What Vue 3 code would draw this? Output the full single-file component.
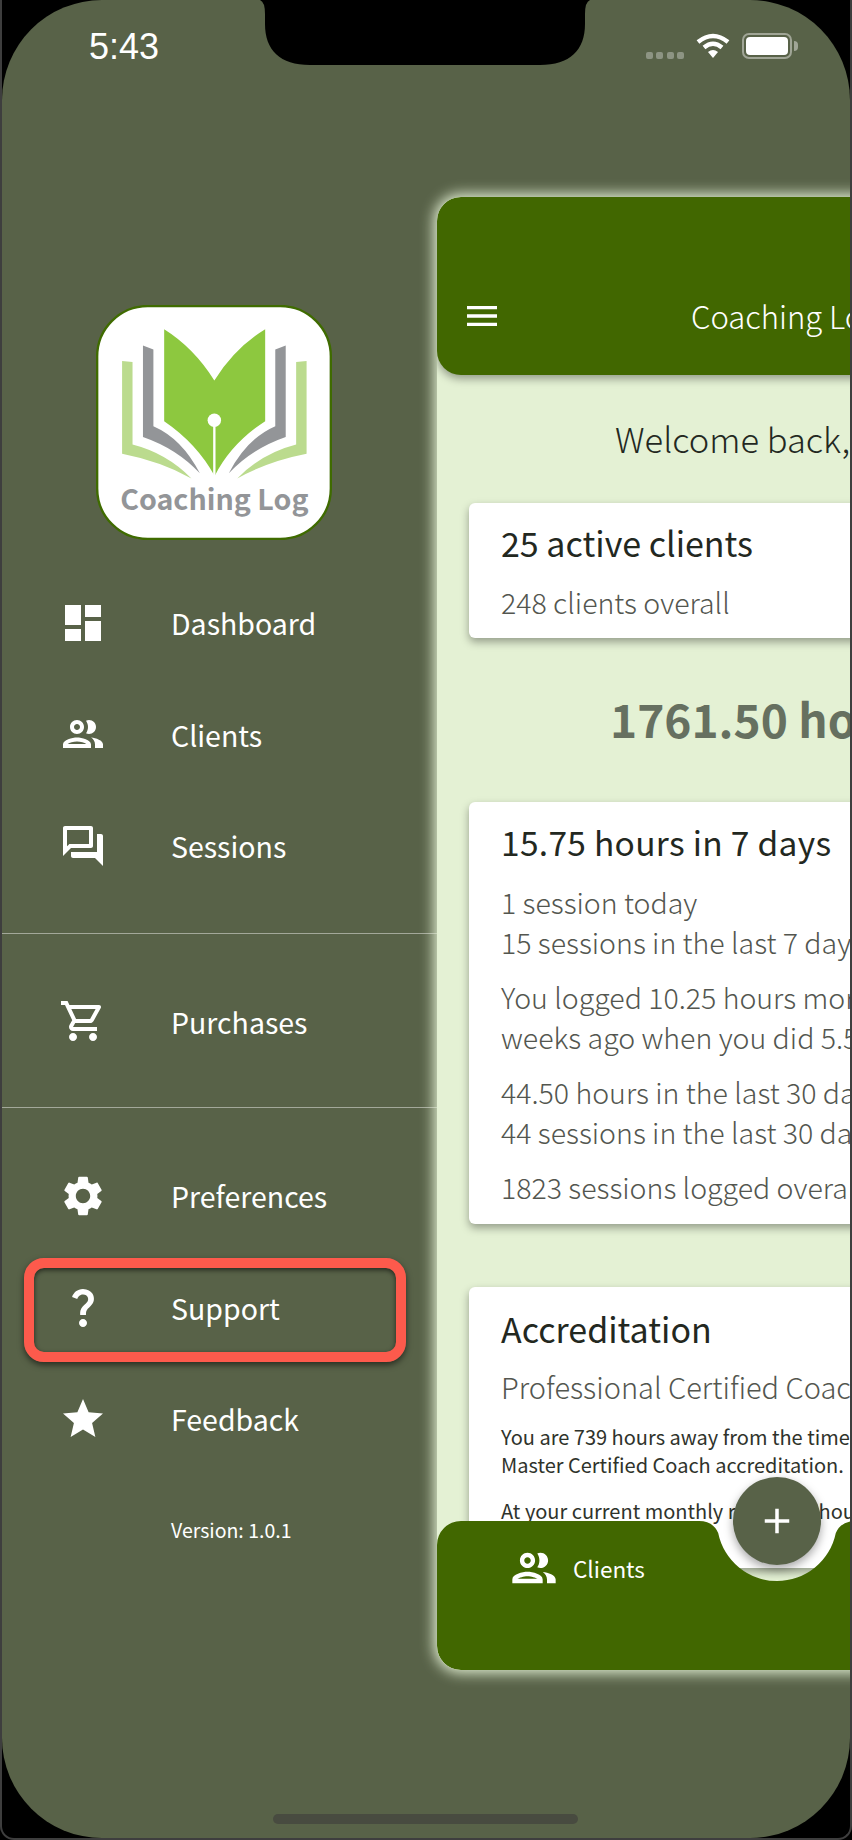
<script setup>
const topNav = [
  { label: 'Dashboard', icon: 'M3 13h8V3H3v10zm0 8h8v-6H3v6zm10 0h8V11h-8v10zm0-18v6h8V3h-8z' },
  { label: 'Clients', icon: 'M9 13.75c-2.34 0-7 1.17-7 3.5V19h14v-1.75c0-2.33-4.66-3.5-7-3.5zM4.34 17c.84-.58 2.87-1.25 4.66-1.25s3.82.67 4.66 1.25H4.34zM9 12c1.93 0 3.5-1.57 3.5-3.5S10.93 5 9 5 5.5 6.57 5.5 8.5 7.07 12 9 12zm0-5c.83 0 1.5.67 1.5 1.5S9.83 10 9 10s-1.5-.67-1.5-1.5S8.17 7 9 7zm7.04 6.81c1.16.84 1.96 1.96 1.96 3.44V19h4v-1.75c0-2.02-3.5-3.17-5.96-3.44zM15 12c1.93 0 3.5-1.57 3.5-3.5S16.93 5 15 5c-.54 0-1.04.13-1.5.35.63.89 1 1.98 1 3.15s-.37 2.26-1 3.15c.46.22.96.35 1.5.35z' },
  { label: 'Sessions', icon: 'M15 4v7H5.17l-.59.59-.58.58V4h11m1-2H3c-.55 0-1 .45-1 1v14l4-4h10c.55 0 1-.45 1-1V3c0-.55-.45-1-1-1zm5 4h-2v9H6v2c0 .55.45 1 1 1h11l4 4V7c0-.55-.45-1-1-1z' }
]
const cartIcon = 'M15.55 13c.75 0 1.41-.41 1.75-1.03l3.58-6.49c.37-.66-.11-1.48-.87-1.48H5.21l-.94-2H1v2h2l3.6 7.59-1.35 2.44C4.52 15.37 5.48 17 7 17h12v-2H7l1.1-2h7.45zM6.16 6h12.15l-2.76 5H8.53L6.16 6zM7 18c-1.1 0-1.99.9-1.99 2S5.9 22 7 22s2-.9 2-2-.9-2-2-2zm10 0c-1.1 0-1.99.9-1.99 2s.89 2 1.99 2 2-.9 2-2-.9-2-2-2z'
const bottomNav = [
  { label: 'Preferences', icon: 'M19.14 12.94c.04-.3.06-.61.06-.94 0-.32-.02-.64-.07-.94l2.03-1.58c.18-.14.23-.41.12-.61l-1.92-3.32c-.12-.22-.37-.29-.59-.22l-2.39.96c-.5-.38-1.03-.7-1.62-.94l-.36-2.54c-.04-.24-.24-.41-.48-.41h-3.84c-.24 0-.43.17-.47.41l-.36 2.54c-.59.24-1.13.57-1.62.94l-2.39-.96c-.22-.08-.47 0-.59.22L2.74 8.87c-.12.21-.08.47.12.61l2.03 1.58c-.05.3-.09.63-.09.94s.02.64.07.94l-2.03 1.58c-.18.14-.23.41-.12.61l1.92 3.32c.12.22.37.29.59.22l2.39-.96c.5.38 1.03.7 1.62.94l.36 2.54c.05.24.24.41.48.41h3.84c.24 0 .44-.17.47-.41l.36-2.54c.59-.24 1.13-.56 1.62-.94l2.39.96c.22.08.47 0 .59-.22l1.92-3.32c.12-.22.07-.47-.12-.61l-2.01-1.58zM12 15.6c-1.98 0-3.6-1.62-3.6-3.6s1.62-3.6 3.6-3.6 3.6 1.62 3.6 3.6-1.62 3.6-3.6 3.6z' },
  { label: 'Support', highlight: true, icon: 'M11.07 12.85c.77-1.39 2.25-2.21 3.11-3.44.91-1.29.4-3.7-2.18-3.7-1.69 0-2.52 1.28-2.87 2.34L6.54 6.96C7.25 4.83 9.18 3 11.99 3c2.35 0 3.96 1.07 4.78 2.41.7 1.15 1.11 3.3.03 4.9-1.2 1.77-2.35 2.31-2.97 3.45-.25.46-.35.76-.35 2.24h-2.89c-.01-.78-.13-2.05.48-3.15zM14 20c0 1.1-.9 2-2 2s-2-.9-2-2 .9-2 2-2 2 .9 2 2z' },
  { label: 'Feedback', icon: 'M12 17.27L18.18 21l-1.64-7.03L22 9.24l-7.19-.61L12 2 9.19 8.63 2 9.24l5.46 4.73L5.82 21z' }
]
const clientsIcon = topNav[1].icon
</script>

<template>
  <div class="device">
    <div class="screen">
      <svg class="notch" width="330" height="66" viewBox="0 0 330 66">
        <path d="M0 0 Q5 2 5 14 V24 C5 50 20 65 50 65 H280 C310 65 325 50 325 24 V14 Q325 2 330 0 Z" fill="#000" />
      </svg>

      <div class="status">
        <span class="time">5:43</span>
        <div class="status-icons">
          <div class="dots"><i></i><i></i><i></i><i></i></div>
          <svg class="wifi" width="34" height="25" viewBox="0 0 34 25" fill="none" stroke="#fff" stroke-width="4.4">
            <path d="M2 9 Q17 -3 32 9" />
            <path d="M8 14.5 Q17 7 26 14.5" />
            <path d="M17 25 L12 19 Q17 15 22 19 Z" fill="#fff" stroke="none" />
          </svg>
          <div class="battery"><div class="battery-fill"></div></div>
        </div>
      </div>

      <aside class="drawer">
        <svg class="logo" width="236" height="235" viewBox="50 48 700 698">
          <rect x="53" y="51" width="694" height="692" rx="150" fill="#fff" stroke="#3f6b00" stroke-width="7" />
          <path d="M127 214 L158 217 V462 Q260 488 333 563 Q240 512 127 490 Z" fill="#bbdb8e" />
          <path d="M675 214 L644 217 V462 Q542 488 469 563 Q562 512 675 490 Z" fill="#bbdb8e" />
          <path d="M189 168 L220 180 V408 Q305 445 358 548 Q290 475 189 440 Z" fill="#939598" />
          <path d="M613 168 L582 180 V408 Q497 445 444 548 Q512 475 613 440 Z" fill="#939598" />
          <path d="M252 120 Q340 175 401 272 Q462 175 552 120 V393 Q450 460 402 556 Q350 460 252 393 Z" fill="#8dc83f" />
          <path d="M401 390 V556" stroke="#fff" stroke-width="7" />
          <circle cx="401" cy="390" r="20" fill="#fff" />
          <text x="401" y="658" text-anchor="middle" class="logo-text">Coaching Log</text>
        </svg>

        <nav class="nav nav-first">
          <a v-for="item in topNav" :key="item.label" class="nav-item">
            <svg class="nav-icon" viewBox="0 0 24 24"><path :d="item.icon" /></svg>
            <span>{{ item.label }}</span>
          </a>
        </nav>
        <div class="divider"></div>
        <nav class="nav nav-single">
          <a class="nav-item">
            <svg class="nav-icon" viewBox="0 0 24 24"><path :d="cartIcon" /></svg>
            <span>Purchases</span>
          </a>
        </nav>
        <div class="divider"></div>
        <nav class="nav nav-last">
          <a v-for="item in bottomNav" :key="item.label" class="nav-item">
            <svg class="nav-icon" viewBox="0 0 24 24"><path :d="item.icon" /></svg>
            <span>{{ item.label }}</span>
            <div v-if="item.highlight" class="highlight"></div>
          </a>
        </nav>
        <div class="version">Version: 1.0.1</div>
      </aside>

      <main class="panel">
        <header class="app-bar">
          <svg class="menu" width="40" height="40" viewBox="0 0 24 24"><path d="M3 18h18v-2H3v2zm0-5h18v-2H3v2zm0-7v2h18V6H3z" /></svg>
          <span class="app-title">Coaching Log</span>
        </header>

        <div class="body">
          <h2 class="welcome">Welcome back,</h2>

          <section class="card card-clients">
            <h3>25 active clients</h3>
            <p class="sub">248 clients overall</p>
          </section>

          <div class="total">1761.50 hours</div>

          <section class="card card-hours">
            <h3>15.75 hours in 7 days</h3>
            <p>1 session today<br />15 sessions in the last 7 days</p>
            <p>You logged 10.25 hours more than<br />weeks ago when you did 5.5 hours</p>
            <p>44.50 hours in the last 30 days<br />44 sessions in the last 30 days</p>
            <p>1823 sessions logged overall</p>
          </section>

          <section class="card card-accred">
            <h3>Accreditation</h3>
            <p class="level">Professional Certified Coach</p>
            <p class="small">You are 739 hours away from the time<br />Master Certified Coach accreditation.</p>
            <p class="small">At your current monthly rate of 44 hours</p>
          </section>
        </div>

        <footer class="tab-bar">
          <svg class="tab-shape" width="415" height="149" viewBox="0 0 415 149">
            <path d="M0 24 A24 24 0 0 1 24 0 H262 Q276 0 281.2 12 A60 60 0 0 0 398.8 12 Q404 0 418 0 H440 V149 H24 A24 24 0 0 1 0 125 Z" fill="#416700" />
          </svg>
          <div class="tab">
            <svg class="tab-icon" viewBox="0 0 24 24"><path :d="clientsIcon" /></svg>
            <span>Clients</span>
          </div>
          <button class="fab">
            <svg width="42" height="42" viewBox="0 0 24 24"><path d="M19 13h-6v6h-2v-6H5v-2h6V5h2v6h6v2z" fill="#fff" /></svg>
          </button>
        </footer>
      </main>

      <div class="home-bar"></div>
    </div>
  </div>
</template>

<style>
html, body {
  margin: 0;
  background: #000;
}
</style>

<style scoped>
.device {
  box-sizing: border-box;
  width: 852px;
  height: 1840px;
  background: #000;
  border: 2px solid #3e3e3e;
  border-top: 0;
  border-radius: 0 0 14px 14px;
}
.screen {
  position: relative;
  height: 1838px;
  background: #586248;
  border-radius: 100px;
  overflow: hidden;
  display: flex;
  font-family: "Noto Sans CJK SC", "Noto Sans", sans-serif;
  color: #fff;
}
.notch {
  position: absolute;
  top: 0;
  left: 258px;
  z-index: 5;
}
.status {
  position: absolute;
  top: 33px;
  left: 87px;
  right: 58px;
  height: 26px;
  display: flex;
  justify-content: space-between;
  align-items: center;
}
.time {
  font-family: "Liberation Sans", sans-serif;
  font-size: 36px;
  line-height: 26px;
  margin-top: 2px;
}
.status-icons {
  display: flex;
  align-items: flex-end;
  gap: 12px;
}
.dots {
  display: flex;
  gap: 3.5px;
}
.dots i {
  display: block;
  width: 7px;
  height: 7px;
  border-radius: 2px;
  background: #8d9483;
}
.wifi {
  margin-bottom: 1px;
}
.battery {
  position: relative;
  box-sizing: border-box;
  width: 50px;
  height: 26px;
  border: 2px solid #a0a596;
  border-radius: 7px;
  padding: 2px;
}
.battery::after {
  content: "";
  position: absolute;
  right: -8px;
  top: 6px;
  width: 4px;
  height: 10px;
  border-radius: 0 4px 4px 0;
  background: #a0a596;
}
.battery-fill {
  height: 100%;
  background: #fff;
  border-radius: 4px;
}

.drawer {
  box-sizing: border-box;
  flex: 0 0 435px;
  padding-top: 305px;
}
.logo {
  display: block;
  margin-left: 94px;
}
.logo-text {
  font-size: 85px;
  font-weight: 700;
  fill: #939598;
}
.nav-first {
  padding: 27px 0 31px;
}
.nav-single {
  padding: 32px 0 30px;
}
.nav-last {
  padding-top: 32px;
}
.nav-item {
  position: relative;
  display: flex;
  align-items: center;
  height: 111.5px;
  font-size: 28.5px;
  color: #fff;
}
.nav-icon {
  flex: none;
  width: 48px;
  height: 48px;
  margin: 0 64px 0 57px;
  fill: #fff;
}
.highlight {
  position: absolute;
  top: 6px;
  left: 22px;
  width: 382px;
  height: 104px;
  box-sizing: border-box;
  border: 10px solid #fd5a4c;
  border-radius: 20px;
  box-shadow: 0 3px 6px rgba(0, 0, 0, .55), inset 0 2px 5px rgba(0, 0, 0, .6);
}
.divider {
  height: 1px;
  background: rgba(255, 255, 255, .45);
}
.version {
  margin: 40px 0 0 169px;
  font-size: 19.5px;
  color: #fff;
}

.panel {
  position: relative;
  flex: none;
  align-self: flex-start;
  width: 560px;
  height: 1473px;
  margin-top: 197px;
  background: #e4f1d4;
  border-radius: 24px;
  box-shadow: 0 0 14px 3px #e4f1d4;
  overflow: hidden;
  white-space: nowrap;
}
.app-bar {
  box-sizing: border-box;
  height: 178px;
  background: #416700;
  border-radius: 24px;
  box-shadow: 0 4px 8px rgba(0, 0, 0, .35);
  display: flex;
  align-items: flex-end;
  padding: 0 0 36px 25px;
}
.menu {
  fill: #fff;
  margin-bottom: 3px;
}
.app-title {
  margin-left: 189px;
  font-size: 31px;
  font-weight: 300;
  line-height: 46px;
}
.body {
  color: #23281f;
}
.welcome {
  margin: 0;
  padding: 38px 0 0 178px;
  font-size: 34.5px;
  font-weight: 300;
  line-height: 50px;
}
.card {
  box-sizing: border-box;
  margin-left: 32px;
  width: 600px;
  background: #fff;
  border-radius: 6px;
  padding: 16px 32px;
  box-shadow: 0 4px 8px rgba(0, 0, 0, .35);
}
.card h3 {
  margin: 0;
  font-size: 34px;
  font-weight: 400;
  line-height: 48px;
}
.card p {
  margin: 0 0 15px;
  font-size: 28.5px;
  font-weight: 300;
  line-height: 40px;
  color: #53564f;
}
.card-clients {
  margin-top: 40px;
  height: 135px;
}
.card .sub {
  margin-top: 15px;
}
.total {
  padding: 46px 0 0 173px;
  height: 118px;
  font-size: 46px;
  font-weight: 700;
  line-height: 68px;
  color: #667060;
}
.card-hours {
  height: 422px;
  padding-top: 16px;
}
.card-hours h3 {
  font-size: 33.5px;
  letter-spacing: .3px;
  margin-bottom: 16px;
}
.card-accred {
  margin-top: 63px;
  height: 281px;
  padding-top: 18px;
}
.card .level {
  font-size: 29px;
  margin: 11px 0 15px;
  line-height: 44px;
}
.card .small {
  font-size: 20px;
  font-weight: 400;
  line-height: 28px;
  color: #2f332b;
  margin-bottom: 18px;
}

.tab-bar {
  position: absolute;
  left: 0;
  bottom: 0;
  width: 415px;
  height: 149px;
}
.tab-shape {
  position: absolute;
  top: 0;
  left: 0;
}
.tab {
  position: relative;
  display: flex;
  align-items: center;
  gap: 13px;
  padding: 21px 0 0 71px;
  font-size: 22.5px;
}
.tab-icon {
  width: 52px;
  height: 52px;
  fill: #fff;
}
.fab {
  position: absolute;
  top: -44px;
  left: 296px;
  width: 88px;
  height: 88px;
  padding: 0;
  border: 0;
  border-radius: 50%;
  background: #586248;
  box-shadow: 0 4px 10px rgba(0, 0, 0, .35);
  display: flex;
  align-items: center;
  justify-content: center;
}
.home-bar {
  position: absolute;
  left: 271px;
  bottom: 14px;
  width: 305px;
  height: 10px;
  border-radius: 5px;
  background: #484b40;
}
</style>
